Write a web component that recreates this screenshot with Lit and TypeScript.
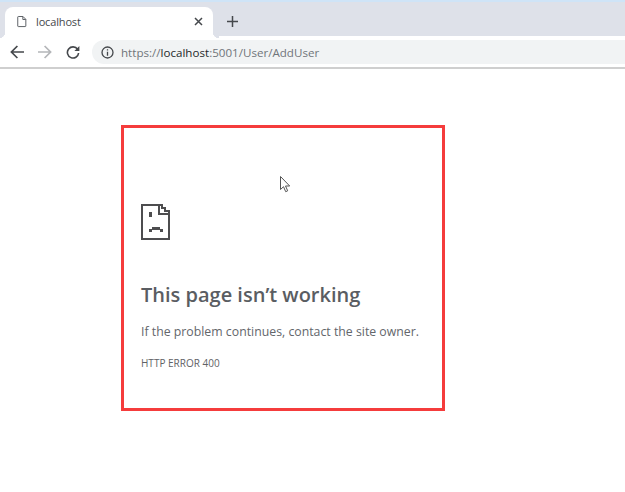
import { LitElement, html, css } from "lit";
import { customElement } from "lit/decorators.js";

@customElement("app-root")
export class AppRoot extends LitElement {
  static styles = css`
    :host {
      display: block;
      width: 625px;
      height: 492px;
      overflow: hidden;
      background: #fff;
      font-family: "Open Sans", "Noto Sans", sans-serif;
      color: #5f6368;
    }
    .strip {
      height: 36px;
      box-sizing: border-box;
      background: #dee1e9;
      border-top: 2px solid #cfe4f7;
      padding: 5px 0 0 5px;
      display: flex;
      align-items: flex-start;
    }
    .tab {
      position: relative;
      width: 208px;
      height: 31px;
      box-sizing: border-box;
      background: #fff;
      border-radius: 8px 8px 0 0;
      display: flex;
      align-items: center;
      padding: 0 10px 3px 12px;
    }
    .tab::before,
    .tab::after {
      content: "";
      position: absolute;
      bottom: 0;
      width: 6px;
      height: 6px;
    }
    .tab::before {
      left: -6px;
      background: radial-gradient(circle at 0 0, #dee1e9 6px, #fff 6.5px);
    }
    .tab::after {
      right: -6px;
      background: radial-gradient(circle at 100% 0, #dee1e9 6px, #fff 6.5px);
    }
    .tab .title {
      flex: 1;
      margin-left: 9px;
      font-size: 11px;
      color: #45484c;
      letter-spacing: -0.15px;
    }
    .plus {
      margin: 9px 0 0 14px;
      display: block;
    }
    .bar {
      height: 33px;
      box-sizing: border-box;
      background: #fff;
      border-bottom: 2px solid #cfcfcf;
      display: flex;
      align-items: flex-start;
      padding: 4px 0 0 10px;
    }
    .nav {
      display: block;
      flex: none;
      margin-top: 5px;
    }
    .back { margin-right: 14px; }
    .fwd { margin-right: 14px; }
    .reload { margin-right: 12px; }
    .omni {
      flex: 1;
      height: 24px;
      background: #f1f3f4;
      border-radius: 12px 0 0 12px;
      display: flex;
      align-items: center;
      padding-left: 9px;
      font-size: 11.6px;
      color: #70757a;
      white-space: pre;
    }
    .omni svg { margin-right: 7px; flex: none; }
    .omni b { font-weight: 400; color: #26282b; }
    .box {
      position: relative;
      width: 324px;
      height: 286px;
      box-sizing: border-box;
      margin: 56px 0 0 121px;
      border: 3px solid #f53c3c;
      padding: 76px 0 0 17px;
    }
    .sad { display: block; }
    h1 {
      margin: 41px 0 0;
      font-size: 20px;
      line-height: 28px;
      font-weight: 600;
      color: #5a5d62;
    }
    p {
      margin: 14px 0 0;
      font-size: 12.3px;
      line-height: 18px;
      color: #63666b;
    }
    .code {
      margin-top: 15px;
      font-size: 10px;
      line-height: 14px;
      color: #5f6266;
    }
    .cursor {
      position: absolute;
      left: 156px;
      top: 48px;
      display: block;
    }
  `;

  render() {
    return html`
      <div class="strip">
        <div class="tab">
          <svg width="10" height="13" viewBox="0 0 12 14" fill="none" stroke="#5f6368" stroke-width="1.2">
            <path d="M1.6 1h5.6l3.4 3.4V12.4a.7.7 0 0 1-.7.7H1.6a.7.7 0 0 1-.7-.7V1.7a.7.7 0 0 1 .7-.7z" />
            <path d="M7 1v3.6h3.6" />
          </svg>
          <span class="title">localhost</span>
          <svg width="9" height="9" viewBox="0 0 9 9" stroke="#45484c" stroke-width="1.5">
            <path d="M1 1l7 7M8 1L1 8" />
          </svg>
        </div>
        <svg class="plus" width="11" height="11" viewBox="0 0 11 11" stroke="#45484c" stroke-width="1.5">
          <path d="M5.5 0v11M0 5.5h11" />
        </svg>
      </div>
      <div class="bar">
        <svg class="nav back" width="14" height="14" viewBox="0 0 14 14" fill="none" stroke="#45484c" stroke-width="1.7">
          <path d="M14 7H1.5M7.4 1L1.4 7l6 6" />
        </svg>
        <svg class="nav fwd" width="14" height="14" viewBox="0 0 14 14" fill="none" stroke="#b4b6b9" stroke-width="1.7">
          <path d="M0 7h12.5M6.6 1l6 6-6 6" />
        </svg>
        <svg class="nav reload" width="14" height="14" viewBox="0 0 14 14" fill="none">
          <path d="M11.6 4.2A5.6 5.6 0 1 0 12.6 8" stroke="#45484c" stroke-width="1.6" />
          <path d="M13.4 1v5H8.4z" fill="#45484c" />
        </svg>
        <div class="omni">
          <svg width="13" height="13" viewBox="0 0 13 13" fill="none">
            <circle cx="6.5" cy="6.5" r="5.5" stroke="#45484c" stroke-width="1.3" />
            <path d="M6.5 5.8v3.9M6.5 3.2v1.4" stroke="#45484c" stroke-width="1.3" />
          </svg>
          <span>https://<b>localhost</b>:5001/User/AddUser</span>
        </div>
      </div>
      <div class="box">
        <svg class="sad" width="29" height="36" viewBox="0 0 29 36" fill="none" shape-rendering="crispEdges">
          <path d="M1 1h17v9h10v25H1z" stroke="#4d4d4f" stroke-width="2.6" />
          <path d="M18 1h3v3h3v3h4v3" stroke="#4d4d4f" stroke-width="2.6" />
          <path d="M8 8h2.5v5H8zM8 25h3v2.5H8zM11 23h8v2.5h-8zM19 25h3v2.5h-3z" fill="#4d4d4f" />
        </svg>
        <h1>This page isn’t working</h1>
        <p>If the problem continues, contact the site owner.</p>
        <div class="code">HTTP ERROR 400</div>
        <svg class="cursor" width="11" height="17" viewBox="0 0 11 17" fill="#fff" stroke="#555" stroke-width="1">
          <path d="M.5.5v13l3-2.8 2.2 5 2-.9-2.2-4.8h4.2z" />
        </svg>
      </div>
    `;
  }
}
